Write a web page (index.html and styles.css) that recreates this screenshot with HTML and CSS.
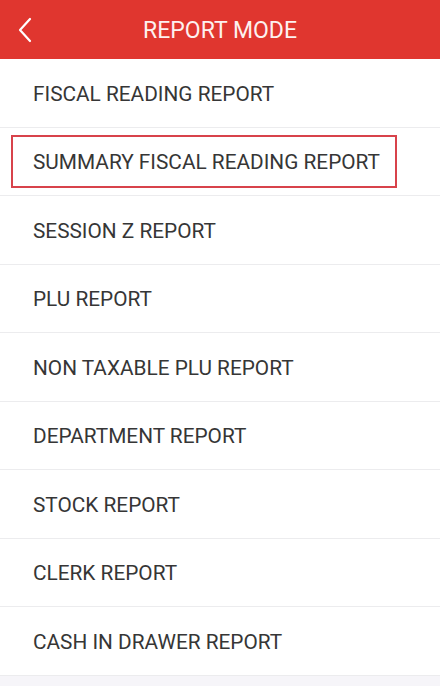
FILE: index.html
```html
<!DOCTYPE html>
<html lang="en">
<head>
    <meta charset="UTF-8">
    <meta name="viewport" content="width=device-width, initial-scale=1.0">
    <title>Report Mode</title>
    <link rel="stylesheet" href="styles.css">
</head>
<body>
    <header class="topbar">
        <span class="back">
            <svg width="16" height="26" viewBox="0 0 16 26">
                <polyline points="13,2 3,13 13,24" fill="none" stroke="#fff" stroke-width="2.2" stroke-linecap="round" stroke-linejoin="round"/>
            </svg>
        </span>
        <h1>REPORT MODE</h1>
    </header>

    <ul class="menu">
        <li><span>FISCAL READING REPORT</span></li>
        <li class="selected"><span>SUMMARY FISCAL READING REPORT</span></li>
        <li><span>SESSION Z REPORT</span></li>
        <li><span>PLU REPORT</span></li>
        <li><span>NON TAXABLE PLU REPORT</span></li>
        <li><span>DEPARTMENT REPORT</span></li>
        <li><span>STOCK REPORT</span></li>
        <li><span>CLERK REPORT</span></li>
        <li><span>CASH IN DRAWER REPORT</span></li>
    </ul>
</body>
</html>
```

FILE: styles.css
```css
body {
    margin: 0;
    background-color: #f6f5f9;
    font-family: Roboto, 'Noto Sans', sans-serif;
}
.topbar {
    position: relative;
    height: 59px;
    background-color: #e0362f;
    display: flex;
    align-items: center;
    justify-content: center;
}
.topbar h1 {
    margin: 0;
    color: #fdf1ef;
    font-size: 23px;
    font-weight: 400;
    padding-top: 2px;
}
.back {
    position: absolute;
    left: 17px;
    top: 17px;
}
.menu {
    list-style: none;
    margin: 0;
    padding: 0;
    background-color: #fff;
}
.menu li {
    border-bottom: 1px solid #ececee;
    display: flex;
    align-items: center;
    padding-left: 11px;
    padding-top: 2px;
    box-sizing: border-box;
    height: 68.5px;
    font-size: 20.8px;
    color: #363636;
}
.menu li span {
    padding-left: 22px;
}
.menu li.selected span {
    display: flex;
    align-items: center;
    box-sizing: border-box;
    width: 386px;
    height: 53px;
    margin-top: -2px;
    border: 2px solid #d8434b;
    padding-left: 20px;
    padding-top: 2px;
}
```
